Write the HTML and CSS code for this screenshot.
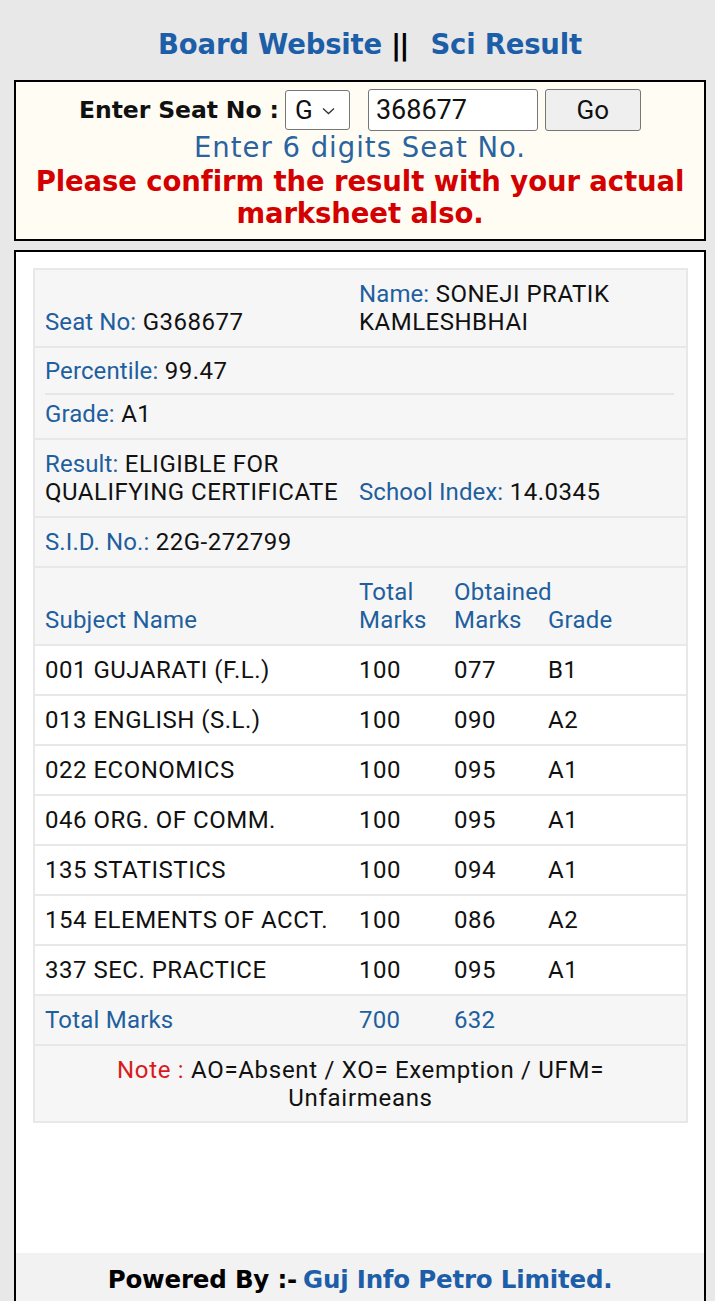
FILE: index.html
```html
<!DOCTYPE html>
<html>
<head>
<meta charset="utf-8">
<link rel="stylesheet" href="styles.css">
</head>
<body>
<div class="top-links">
  <a class="blue-link">Board Website</a><span class="sep">||</span><a class="blue-link">Sci Result</a>
</div>
<div class="search-box">
  <div class="search-row">
    <span class="search-label">Enter Seat No :</span>
    <span class="fake-select">G<svg class="chev" width="13" height="8" viewBox="0 0 13 8"><path d="M1 1.5 L6.5 6.5 L12 1.5" fill="none" stroke="#333" stroke-width="1.3"/></svg></span>
    <span class="fake-input">368677</span>
    <span class="fake-button">Go</span>
  </div>
  <div class="hint">Enter 6 digits Seat No.</div>
  <div class="warn">Please confirm the result with your actual marksheet also.</div>
</div>
<div class="main-box">
  <table class="result">
    <colgroup><col class="c1"><col class="c2"><col class="c3"><col class="c4"></colgroup>
    <tr class="info">
      <td><span class="lbl">Seat No:</span> G368677</td>
      <td colspan="3"><span class="lbl">Name:</span> SONEJI PRATIK<br>KAMLESHBHAI</td>
    </tr>
    <tr class="info">
      <td colspan="4" class="pg">
        <div class="perc"><span class="lbl">Percentile:</span> 99.47</div>
        <div class="grade"><span class="lbl">Grade:</span> A1</div>
      </td>
    </tr>
    <tr class="info">
      <td class="nowrap"><span class="lbl">Result:</span> ELIGIBLE FOR<br>QUALIFYING CERTIFICATE</td>
      <td colspan="3" class="nowrap"><span class="lbl">School Index:</span> 14.0345</td>
    </tr>
    <tr class="info">
      <td colspan="4"><span class="lbl">S.I.D. No.:</span> 22G-272799</td>
    </tr>
    <tr class="head">
      <td>Subject Name</td>
      <td>Total<br>Marks</td>
      <td class="nowrap">Obtained<br>Marks</td>
      <td>Grade</td>
    </tr>
    <tr class="sub"><td>001 GUJARATI (F.L.)</td><td>100</td><td>077</td><td>B1</td></tr>
    <tr class="sub"><td>013 ENGLISH (S.L.)</td><td>100</td><td>090</td><td>A2</td></tr>
    <tr class="sub"><td>022 ECONOMICS</td><td>100</td><td>095</td><td>A1</td></tr>
    <tr class="sub"><td>046 ORG. OF COMM.</td><td>100</td><td>095</td><td>A1</td></tr>
    <tr class="sub"><td>135 STATISTICS</td><td>100</td><td>094</td><td>A1</td></tr>
    <tr class="sub"><td class="nowrap">154 ELEMENTS OF ACCT.</td><td>100</td><td>086</td><td>A2</td></tr>
    <tr class="sub"><td>337 SEC. PRACTICE</td><td>100</td><td>095</td><td>A1</td></tr>
    <tr class="total"><td>Total Marks</td><td>700</td><td>632</td><td></td></tr>
    <tr class="note"><td colspan="4"><span class="note-lbl">Note :</span> AO=Absent / XO= Exemption / UFM=<br>Unfairmeans</td></tr>
  </table>
  <div class="footer">
    <span class="pw">Powered By :-</span><a class="blue-link">Guj Info Petro Limited.</a>
  </div>
</div>
</body>
</html>
```
FILE: styles.css
```css
html, body {
  margin: 0;
  padding: 0;
}
body {
  background: #e8e8e8;
  font-family: Roboto, "Liberation Sans", sans-serif;
  color: #111;
  overflow: hidden;
}
.top-links {
  height: 80px;
  box-sizing: border-box;
  padding: 7px 0 0 25px;
  display: flex;
  justify-content: center;
  align-items: center;
  font-family: "DejaVu Sans", sans-serif;
  font-weight: 700;
  font-size: 27.5px;
  letter-spacing: -0.2px;
}
.blue-link {
  color: #1d5ea8;
  text-decoration: none;
}
.sep {
  color: #000;
  margin: 0 23px 0 9px;
  font-size: 28px;
  letter-spacing: -2px;
  position: relative;
  top: 2px;
}
.search-box {
  margin: 0 9px 0 14px;
  border: 2px solid #000;
  background: #fffdf3;
  height: 161px;
  box-sizing: border-box;
  padding-top: 7px;
  text-align: center;
}
.search-row {
  display: flex;
  justify-content: center;
  align-items: center;
  height: 42px;
}
.search-label {
  font-family: "DejaVu Sans", sans-serif;
  font-weight: 700;
  font-size: 23.5px;
  letter-spacing: -0.1px;
  margin-right: 6px;
}
.fake-select {
  width: 65px;
  height: 40px;
  box-sizing: border-box;
  border: 1px solid #767676;
  border-radius: 3px;
  background: #fff;
  display: flex;
  align-items: center;
  padding-left: 9px;
  font-size: 26px;
  gap: 9px;
  color: #111;
}
.chev {
  margin-top: 1px;
}
.fake-input {
  margin-left: 18px;
  width: 170px;
  height: 42px;
  box-sizing: border-box;
  border: 1px solid #767676;
  border-radius: 3px;
  background: #fff;
  display: flex;
  align-items: center;
  padding-left: 7px;
  font-size: 27px;
  text-align: left;
}
.fake-button {
  margin-left: 7px;
  width: 96px;
  height: 42px;
  box-sizing: border-box;
  border: 1px solid #767676;
  border-radius: 3px;
  background: #efefef;
  display: flex;
  align-items: center;
  justify-content: center;
  font-size: 26px;
}
.hint {
  font-family: "DejaVu Sans", sans-serif;
  color: #2a63a0;
  font-size: 27.5px;
  line-height: 32px;
  letter-spacing: 1px;
}
.warn {
  font-family: "DejaVu Sans", sans-serif;
  font-weight: 700;
  color: #d40000;
  font-size: 27.5px;
  line-height: 32px;
  margin-top: 2px;
  letter-spacing: -0.1px;
  padding: 0 10px;
}
.main-box {
  margin: 9px 9px 0 14px;
  border: 2px solid #000;
  border-bottom: none;
  background: #fff;
  padding-top: 16px;
}
.result {
  width: 653px;
  margin-left: 17px;
  border-collapse: collapse;
  table-layout: fixed;
  font-size: 24px;
  letter-spacing: 0.5px;
  border: 2px solid #e8e8e8;
}
.c1 { width: 315px; }
.c2 { width: 95px; }
.c3 { width: 94px; }
.c4 { width: 149px; }
.result td {
  padding: 10px 0 10px 10px;
  line-height: 28px;
  vertical-align: bottom;
  border-top: 2px solid #e8e8e8;
  text-align: left;
}
.nowrap {
  white-space: nowrap;
}
.result tr:first-child td {
  border-top: none;
}
.info td, .head td, .total td, .note td {
  background: #f6f6f6;
}
.head td {
  color: #1f5f9e;
  letter-spacing: 0.2px;
}
.sub td {
  background: #fff;
}
.lbl {
  color: #1f5f9e;
  letter-spacing: 0.1px;
}
.total td {
  color: #1f5f9e;
  letter-spacing: 0.2px;
}
.result td.pg {
  padding: 0 12px 0 10px;
}
.perc {
  padding: 9px 0 8px 0;
  border-bottom: 2px solid #e6e6e6;
}
.grade {
  padding: 5px 0 10px 0;
}
.result .note td {
  text-align: center;
  padding: 10px 8px 9px 8px;
  letter-spacing: 0.7px;
}
.note-lbl {
  color: #d91a1a;
}
.footer {
  margin-top: 130px;
  background: #f2f2f2;
  height: 52px;
  display: flex;
  justify-content: center;
  align-items: center;
  font-family: "DejaVu Sans", sans-serif;
  font-weight: 700;
  font-size: 24.5px;
  letter-spacing: -0.2px;
  gap: 6px;
}
.pw {
  color: #000;
}
```
